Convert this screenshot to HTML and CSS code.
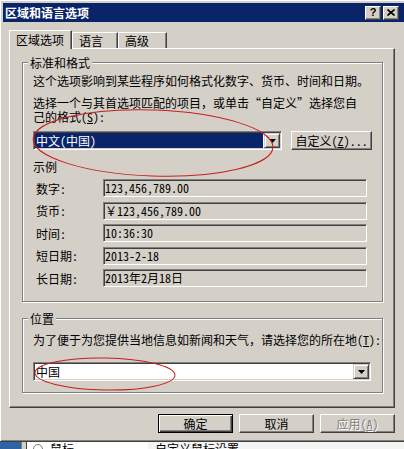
FILE: index.html
```html
<!DOCTYPE html>
<html lang="zh-CN">
<head>
    <meta charset="UTF-8">
    <title>区域和语言选项</title>
    <link rel="stylesheet" href="styles.css">
</head>
<body>

<div class="screen">
    <div class="window">
        <div class="titlebar">
            <span class="title">区域和语言选项</span>
            <div class="caption-btns">
                <span class="cap-btn cap-help">?</span>
                <span class="cap-btn">
                    <svg width="8" height="7" viewBox="0 0 8 7"><path d="M0.5 0.5 L7.5 6.5 M7.5 0.5 L0.5 6.5" stroke="#000" stroke-width="1.6" fill="none"/></svg>
                </span>
            </div>
        </div>

        <div class="tabs">
            <div class="tab tab-active">区域选项</div>
            <div class="tab tab-lang">语言</div>
            <div class="tab tab-adv">高级</div>
        </div>

        <div class="panel">
            <div class="group g-format">
                <div class="group-title">标准和格式</div>
                <p class="line intro">这个选项影响到某些程序如何格式化数字、货币、时间和日期。</p>
                <p class="line choose">选择一个与其首选项匹配的项目，或单击“自定义”选择您自<br>己的格式(<u>S</u>):</p>

                <div class="combo-row">
                    <div class="combo combo-fmt">
                        <div class="combo-value selected">中文(中国)</div>
                        <span class="drop-btn">
                            <svg width="7" height="4" viewBox="0 0 7 4"><polygon points="0,0 7,0 3.5,4" fill="#000"/></svg>
                        </span>
                    </div>
                    <button class="btn btn-custom">自定义(<u>Z</u>)...</button>
                </div>

                <div class="subhead">示例</div>
                <div class="samples">
                    <div class="sample"><span class="sample-label">数字:</span><span class="field">123,456,789.00</span></div>
                    <div class="sample"><span class="sample-label">货币:</span><span class="field">￥123,456,789.00</span></div>
                    <div class="sample"><span class="sample-label">时间:</span><span class="field">10:36:30</span></div>
                    <div class="sample"><span class="sample-label">短日期:</span><span class="field">2013-2-18</span></div>
                    <div class="sample"><span class="sample-label">长日期:</span><span class="field">2013年2月18日</span></div>
                </div>
            </div>

            <div class="group g-location">
                <div class="group-title">位置</div>
                <p class="line loc-text">为了便于为您提供当地信息如新闻和天气，请选择您的所在地(<u>T</u>):</p>
                <div class="combo combo-loc">
                    <div class="combo-value">中国</div>
                    <span class="drop-btn">
                        <svg width="7" height="4" viewBox="0 0 7 4"><polygon points="0,0 7,0 3.5,4" fill="#000"/></svg>
                    </span>
                </div>
            </div>
        </div>

        <div class="actions">
            <button class="btn btn-default">确定</button>
            <button class="btn">取消</button>
            <button class="btn" disabled>应用(<u>A</u>)</button>
        </div>
    </div>

    <!-- window behind the dialog -->
    <div class="taskstrip">
        <div class="ts-blue"></div>
        <div class="ts-sep"></div>
        <div class="ts-list">
            <span class="ts-icon"></span>
            <span class="ts-name">鼠标</span>
        </div>
        <div class="ts-desc">自定义鼠标设置</div>
    </div>

    <!-- red marks drawn over the screenshot -->
    <svg class="marks" width="404" height="449" viewBox="0 0 404 449">
        <ellipse cx="153" cy="143" rx="120" ry="33" transform="rotate(2 153 143)" fill="none" stroke="#c81e1e" stroke-width="1"/>
        <ellipse cx="105" cy="374" rx="70" ry="16" transform="rotate(1 105 374)" fill="none" stroke="#c81e1e" stroke-width="1"/>
    </svg>
</div>

</body>
</html>
```

FILE: styles.css
```css
* {
    box-sizing: border-box;
}

body {
    margin: 0;
    background: #d4d0c8;
    font-family: "Noto Sans Mono CJK SC", "Noto Sans CJK SC", "Liberation Mono", monospace;
    font-size: 12px;
    line-height: 13px;
    color: #000;
}

p {
    margin: 0;
}

u {
    text-decoration: underline;
}

.screen {
    position: relative;
    width: 404px;
    height: 449px;
    overflow: hidden;
}

.window {
    height: 442px;
    padding: 3px 0 0 3px;
    background: #d4d0c8;
    border-bottom: 1px solid #404040;
    box-shadow: inset 1px 1px #fff, inset 0 -1px #808080;
}

/* Title bar */
.titlebar {
    height: 19px;
    display: flex;
    align-items: center;
    justify-content: space-between;
    padding: 0 5px 0 2px;
    background: #0a246a;
    color: #fff;
    font-weight: bold;
}

.caption-btns {
    display: flex;
    gap: 2px;
}

.cap-btn {
    width: 16px;
    height: 14px;
    display: flex;
    align-items: center;
    justify-content: center;
    background: #d4d0c8;
    color: #000;
    border: 1px solid;
    border-color: #fff #404040 #404040 #fff;
    box-shadow: inset -1px -1px #808080;
    font-family: "Liberation Sans", sans-serif;
    font-size: 11px;
}

/* Tabs */
.tabs {
    display: flex;
    align-items: flex-end;
    height: 18px;
    margin: 8px 0 0 6px;
}

.tab {
    height: 16px;
    line-height: 15px;
    padding-left: 6px;
    border: 1px solid;
    border-color: #fff #404040 transparent #fff;
    border-bottom: none;
    box-shadow: inset -1px 0 #808080;
    background: #d4d0c8;
}

.tab-active {
    position: relative;
    z-index: 1;
    width: 63px;
    height: 19px;
    line-height: 17px;
    margin-bottom: -1px;
    padding-left: 6px;
}

.tab-lang {
    width: 46px;
}

.tab-adv {
    width: 49px;
}

/* Tab page */
.panel {
    width: 386px;
    height: 360px;
    margin-left: 6px;
    padding: 13px 0 0 12px;
    border: 1px solid;
    border-color: #fff #404040 #404040 #fff;
    box-shadow: inset -1px -1px #808080;
}

.group {
    width: 361px;
    padding: 0 10px;
    border: 1px solid #808080;
    box-shadow: inset 1px 1px #fff, 1px 1px #fff;
}

.group-title {
    width: max-content;
    margin: -7px 0 0 -5px;
    padding: 0 2px;
    background: #d4d0c8;
}

.line {
    white-space: nowrap;
}

.g-format {
    padding-bottom: 14px;
}

.intro {
    margin-top: 5px;
}

.choose {
    margin-top: 9px;
    line-height: 14px;
}

.combo-row {
    display: flex;
    gap: 9px;
    margin-top: 7px;
}

.combo {
    height: 19px;
    display: flex;
    padding: 1px;
    background: #fff;
    border: 1px solid;
    border-color: #808080 #fff #fff #808080;
    box-shadow: inset 1px 1px #404040, inset -1px -1px #d4d0c8;
}

.combo-fmt {
    width: 250px;
}

.combo-value {
    flex: 1;
    line-height: 15px;
    padding-left: 1px;
}

.combo-value.selected {
    margin-right: 1px;
    background: #0a246a;
    color: #fff;
}

.drop-btn {
    width: 16px;
    display: flex;
    align-items: center;
    justify-content: center;
    background: #d4d0c8;
    border: 1px solid;
    border-color: #d4d0c8 #404040 #404040 #d4d0c8;
    box-shadow: inset 1px 1px #fff, inset -1px -1px #808080;
}

.btn {
    width: 75px;
    height: 19px;
    padding: 0;
    font: inherit;
    color: #000;
    background: #d4d0c8;
    border: 1px solid;
    border-color: #fff #404040 #404040 #fff;
    box-shadow: inset -1px -1px #808080;
}

.btn-custom {
    width: 81px;
}

.btn-default {
    border-color: #000;
    box-shadow: inset 1px 1px #fff, inset -1px -1px #404040, inset -2px -2px #808080;
}

.btn:disabled {
    color: #808080;
    text-shadow: 1px 1px #fff;
}

.subhead {
    margin-top: 10px;
}

.samples {
    display: flex;
    flex-direction: column;
    gap: 4.5px;
    margin-top: 6px;
    padding-left: 3px;
}

.sample {
    display: flex;
    align-items: center;
}

.sample-label {
    width: 67px;
}

.field {
    width: 264px;
    height: 18px;
    padding-left: 1px;
    line-height: 15px;
    border: 1px solid;
    border-color: #808080 #fff #fff #808080;
    box-shadow: inset 1px 1px #404040, inset -1px -1px #d4d0c8;
}

.g-location {
    margin-top: 16px;
    padding-bottom: 11px;
}

.loc-text {
    margin-top: 8px;
}

.combo-loc {
    width: 338px;
    margin-top: 16px;
}

/* Dialog buttons */
.actions {
    display: flex;
    justify-content: flex-end;
    gap: 6px;
    margin-top: 6px;
    padding-right: 9px;
}

/* Window behind */
.taskstrip {
    display: flex;
    height: 7px;
    overflow: hidden;
    background: #fff;
}

.ts-blue {
    width: 21px;
    background: #2f63a3;
}

.ts-sep {
    width: 6px;
    background: #d4d0c8;
    border-left: 1px solid #808080;
    border-right: 1px solid #404040;
}

.ts-list {
    width: 121px;
    display: flex;
    gap: 7px;
    padding: 1px 0 0 6px;
}

.ts-icon {
    width: 10px;
    height: 10px;
    margin-top: 1px;
    border: 1px solid #7a7a7a;
    border-radius: 50% 50% 0 0;
}

.ts-name {
    line-height: 12px;
}

.ts-desc {
    flex: 1;
    padding: 1px 0 0 7px;
    line-height: 12px;
    background: #f4f4f4;
}

.marks {
    position: absolute;
    top: 0;
    left: 0;
    pointer-events: none;
}
```
